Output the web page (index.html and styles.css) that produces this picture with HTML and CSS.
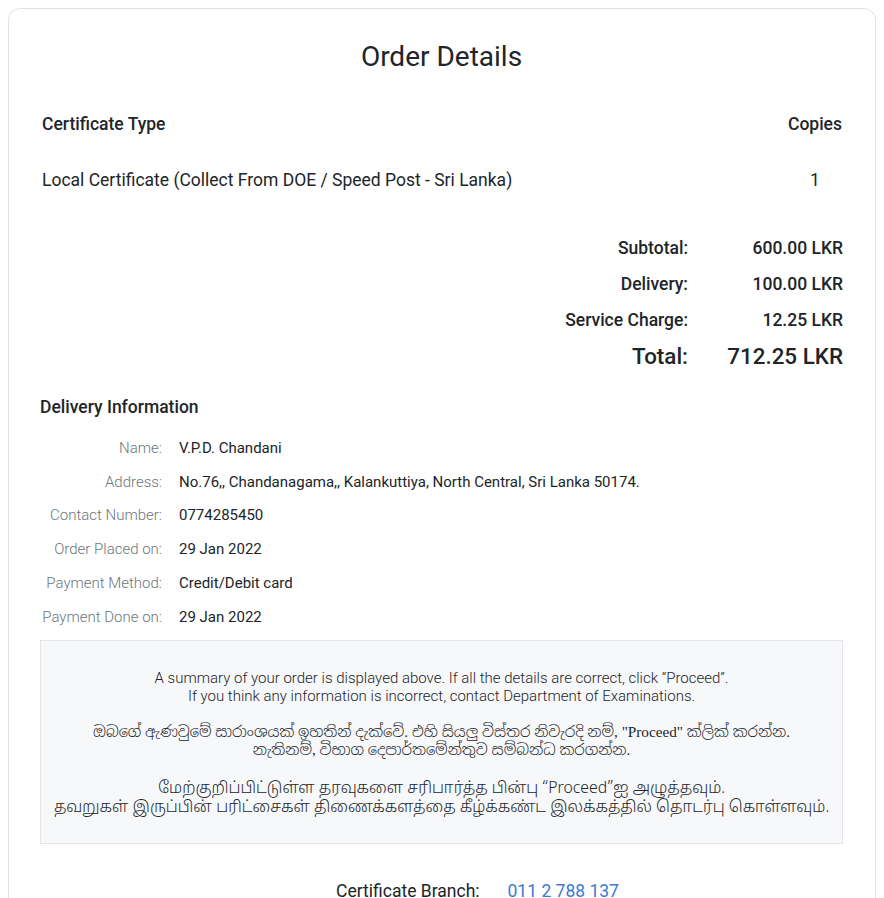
FILE: index.html
```html
<!DOCTYPE html>
<html lang="en">
<head>
<meta charset="utf-8">
<title>Order Details</title>
<link rel="stylesheet" href="styles.css">
</head>
<body>
<div class="card">
  <h1 class="title">Order Details</h1>

  <div class="items">
    <div class="items-row items-head">
      <div class="col-type">Certificate Type</div>
      <div class="col-copies">Copies</div>
    </div>
    <div class="items-row items-body">
      <div class="col-type">Local Certificate (Collect From DOE / Speed Post - Sri Lanka)</div>
      <div class="col-copies">1</div>
    </div>
  </div>

  <div class="totals">
    <div class="t-label">Subtotal:</div><div class="t-value">600.00 LKR</div>
    <div class="t-label">Delivery:</div><div class="t-value">100.00 LKR</div>
    <div class="t-label">Service Charge:</div><div class="t-value">12.25 LKR</div>
    <div class="t-label t-total">Total:</div><div class="t-value t-total">712.25 LKR</div>
  </div>

  <h2 class="section-title">Delivery Information</h2>
  <div class="info">
    <div class="i-label">Name:</div><div class="i-value">V.P.D. Chandani</div>
    <div class="i-label">Address:</div><div class="i-value">No.76,, Chandanagama,, Kalankuttiya, North Central, Sri Lanka 50174.</div>
    <div class="i-label">Contact Number:</div><div class="i-value">0774285450</div>
    <div class="i-label">Order Placed on:</div><div class="i-value">29 Jan 2022</div>
    <div class="i-label">Payment Method:</div><div class="i-value">Credit/Debit card</div>
    <div class="i-label">Payment Done on:</div><div class="i-value">29 Jan 2022</div>
  </div>

  <div class="notice">
    <p class="n-en">A summary of your order is displayed above. If all the details are correct, click “Proceed”.<br>If you think any information is incorrect, contact Department of Examinations.</p>
    <p class="n-si" lang="si">ඔබගේ ඇණවුමේ සාරාංශයක් ඉහතින් දැක්වේ. එහි සියලු විස්තර නිවැරදි නම්, "Proceed" ක්ලික් කරන්න.<br>නැතිනම්, විභාග දෙපාර්තමේන්තුව සම්බන්ධ කරගන්න.</p>
    <p class="n-ta" lang="ta">மேற்குறிப்பிட்டுள்ள தரவுகளை சரிபார்த்த பின்பு “Proceed”ஐ அழுத்தவும்.<br>தவறுகள் இருப்பின் பரிட்சைகள் திணைக்களத்தை கீழ்க்கண்ட இலக்கத்தில் தொடர்பு கொள்ளவும்.</p>
  </div>

  <div class="contact">
    <span class="c-label">Certificate Branch:</span>
    <a class="c-phone" href="#">011 2 788 137</a>
  </div>
</div>
</body>
</html>
```

FILE: styles.css
```css
* { box-sizing: border-box; }

body {
  margin: 8px;
  font-family: Roboto, "Noto Sans", "Liberation Sans", sans-serif;
  color: #212529;
  background: #fff;
}

.card {
  border: 1px solid #dee2e6;
  border-radius: 12px;
  padding: 31px 32px 40px 31px;
  min-height: 1000px;
}

.title {
  margin: 0 0 38px;
  text-align: center;
  font-size: 28px;
  font-weight: 400;
  line-height: 34px;
}

.items-row {
  display: grid;
  grid-template-columns: 1fr auto;
  align-items: center;
  padding: 0 1px 0 2px;
  font-size: 17.5px;
  line-height: 24px;
}

.items-head {
  font-weight: 500;
  margin-bottom: 32px;
}

.items-body {
  font-weight: 400;
}

.col-copies {
  min-width: 54px;
  text-align: center;
}

.totals {
  display: grid;
  grid-template-columns: 1fr 155px;
  grid-auto-rows: 36px;
  align-items: center;
  margin-top: 38px;
  font-size: 17.5px;
  font-weight: 500;
}

.t-label, .t-value { text-align: right; }

.t-total {
  font-size: 22.4px;
  font-weight: 500;
}

.section-title {
  margin: 21px 0 0;
  font-size: 17.5px;
  font-weight: 500;
  line-height: 24px;
}

.info {
  display: grid;
  grid-template-columns: 122px 1fr;
  column-gap: 17px;
  grid-auto-rows: 33.8px;
  align-items: center;
  margin-top: 12px;
  font-size: 15px;
}

.i-label {
  text-align: right;
  font-weight: 300;
  color: #6c757d;
}

.i-value { color: #212529; }

.notice {
  margin-top: 6px;
  background: #f7f8fa;
  border: 1px solid #e4e6e9;
  padding: 28px 4px 25px;
  text-align: center;
  color: #212529;
}

.notice p { margin: 0; }

.n-en {
  font-size: 15px;
  font-weight: 300;
  line-height: 18px;
}

.n-si {
  margin-top: 18px !important;
  font-family: "Liberation Serif", "Noto Sans Sinhala", serif;
  font-size: 15.2px;
  font-weight: 300;
  line-height: 18px;
}

.n-ta {
  margin-top: 21px !important;
  font-family: "Noto Sans Tamil", Roboto, sans-serif;
  font-size: 15.8px;
  font-weight: 300;
  line-height: 19px;
  white-space: nowrap;
}

.contact {
  display: flex;
  justify-content: center;
  gap: 28px;
  margin-top: 35px;
  padding-left: 72px;
  font-size: 17.5px;
  line-height: 24px;
}

.c-phone {
  color: #3b7bd4;
  text-decoration: none;
}
```
